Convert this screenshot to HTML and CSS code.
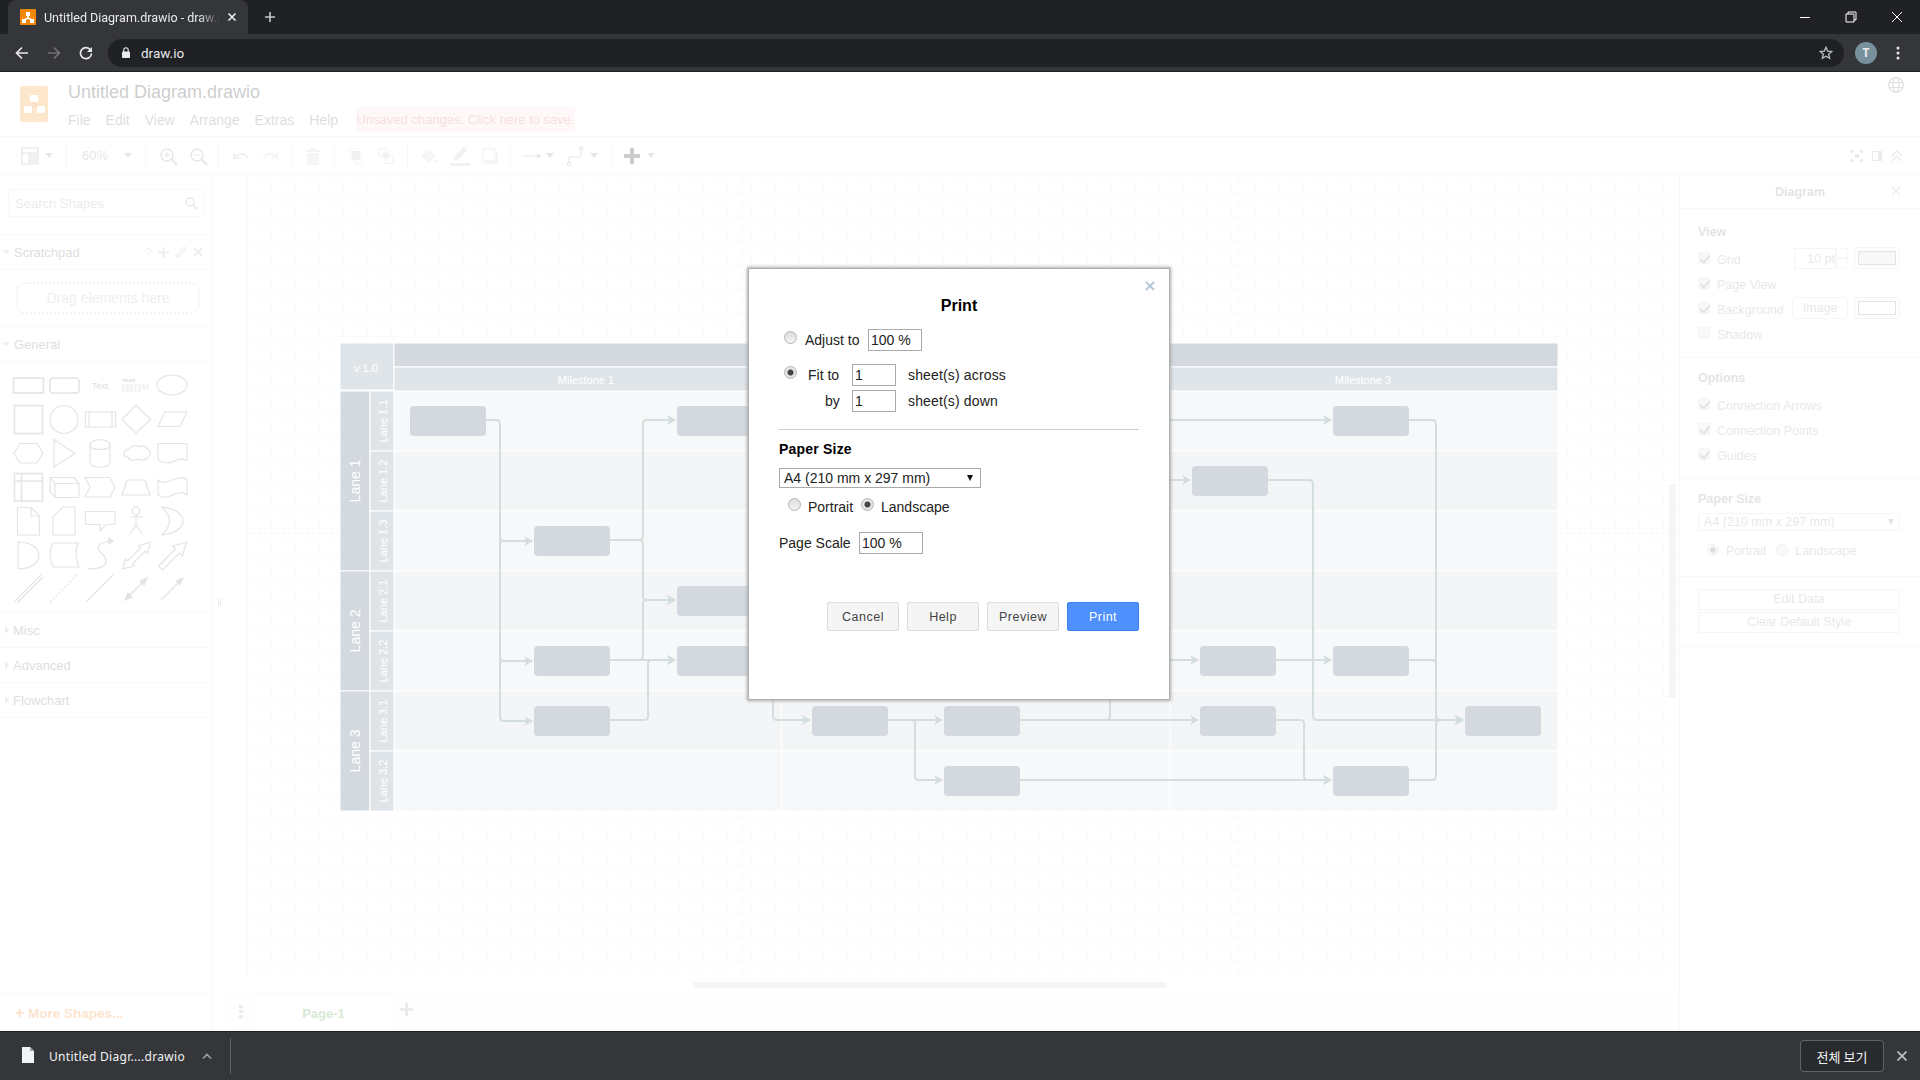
FILE: index.html
```html
<!DOCTYPE html>
<html lang="en">
<head>
    <meta charset="UTF-8">
    <title>Untitled Diagram.drawio - draw.io</title>
    <link rel="stylesheet" href="styles.css">
</head>
<body>

    <!-- Browser tab strip -->
    <div class="tabstrip">
        <div class="tab">
            <svg class="favicon" width="16" height="16" viewBox="0 0 16 16">
                <rect width="16" height="16" rx="1" fill="#f08705"/>
                <path d="M8 6v3M8 9l-4 2M8 9l4 2" stroke="#fff" stroke-width="1.5"/>
                <rect x="6" y="3" width="4" height="4" fill="#fff"/>
                <rect x="2" y="10" width="4" height="4" fill="#fff"/>
                <rect x="10" y="10" width="4" height="4" fill="#fff"/>
            </svg>
            <span class="tab-title">Untitled Diagram.drawio - draw.io</span>
            <svg class="tab-close" width="10" height="10" viewBox="0 0 10 10"><path d="M1.5 1.5l7 7M8.5 1.5l-7 7" stroke="#e8eaed" stroke-width="1.7"/></svg>
        </div>
        <svg class="new-tab" width="12" height="12" viewBox="0 0 12 12"><path d="M6 1v10M1 6h10" stroke="#c4c7c5" stroke-width="1.6"/></svg>
        <div class="window-btns">
            <svg width="12" height="12" viewBox="0 0 12 12"><path d="M1 6.5h10" stroke="#fff" stroke-width="1"/></svg>
            <svg width="12" height="12" viewBox="0 0 12 12"><path d="M3 3V1h8v8H9M1 3h8v8H1z" fill="none" stroke="#fff" stroke-width="1"/></svg>
            <svg width="12" height="12" viewBox="0 0 12 12"><path d="M1 1l10 10M11 1L1 11" stroke="#fff" stroke-width="1"/></svg>
        </div>
    </div>

    <!-- Browser address bar -->
    <div class="navbar">
        <svg class="nav-btn" width="14" height="14" viewBox="0 0 14 14"><path d="M13 7H2M7 1.5L1.5 7 7 12.5" fill="none" stroke="#e8eaed" stroke-width="1.7"/></svg>
        <svg class="nav-btn" width="14" height="14" viewBox="0 0 14 14"><path d="M1 7h11M7 1.5L12.5 7 7 12.5" fill="none" stroke="#707275" stroke-width="1.7"/></svg>
        <svg class="nav-btn" width="14" height="14" viewBox="0 0 14 14"><path d="M11.5 4A5.5 5.5 0 1 0 12.5 7.5" fill="none" stroke="#e8eaed" stroke-width="1.7"/><path d="M13 1v5H8z" fill="#e8eaed"/></svg>
        <div class="omnibox">
            <svg width="8" height="11" viewBox="0 0 8 11"><path d="M1.8 5V3a2.2 2.2 0 0 1 4.4 0v2" fill="none" stroke="#e8eaed" stroke-width="1.1"/><rect y="4.5" width="8" height="6.5" rx="1" fill="#e8eaed"/></svg>
            <span class="url">draw.io</span>
            <svg class="star" width="14" height="14" viewBox="0 0 14 14"><path d="M7 1.3l1.7 3.8 4.1.4-3.1 2.7.9 4.1L7 10.2l-3.6 2.1.9-4.1L1.2 5.5l4.1-.4z" fill="none" stroke="#bdc1c6" stroke-width="1.3"/></svg>
        </div>
        <div class="avatar">T</div>
        <svg class="kebab" width="4" height="14" viewBox="0 0 4 14"><circle cx="2" cy="2" r="1.5"/><circle cx="2" cy="7" r="1.5"/><circle cx="2" cy="12" r="1.5"/></svg>
    </div>

    <div class="app">

        <!-- draw.io header -->
        <div class="header">
            <svg class="logo" width="28" height="36" viewBox="0 0 28 36">
                <rect width="28" height="36" rx="2" fill="#f08705"/>
                <path d="M14 14l-7 8h14z" fill="#df6c0c"/>
                <rect x="10" y="9" width="8" height="7" rx="1" fill="#fff"/>
                <rect x="4" y="20" width="8" height="7" rx="1" fill="#fff"/>
                <rect x="17" y="20" width="8" height="7" rx="1" fill="#fff"/>
            </svg>
            <div class="header-text">
                <div class="doc-title">Untitled Diagram.drawio</div>
                <div class="menu">
                    <span>File</span><span>Edit</span><span>View</span><span>Arrange</span><span>Extras</span><span>Help</span>
                    <div class="unsaved">Unsaved changes. Click here to save.</div>
                </div>
            </div>
            <svg class="globe" width="16" height="16" viewBox="0 0 16 16" fill="none" stroke="#666" stroke-width="1.2">
                <circle cx="8" cy="8" r="7.3"/><ellipse cx="8" cy="8" rx="3.2" ry="7.3"/><path d="M1 5.5h14M1 10.5h14"/>
            </svg>
        </div>

        <!-- draw.io toolbar -->
        <div class="toolbar">
            <div class="tb-group g-layout">
                <svg class="tb-btn" viewBox="0 0 24 24"><path d="M4 4h16v16H4zM4 9h16M11 9v11" fill="none" stroke="#777" stroke-width="1.2"/><rect x="11.5" y="9.5" width="8" height="10" fill="#bbb"/></svg>
                <i class="tb-caret"></i>
            </div>
            <div class="tb-group g-zoom">
                <span class="zoom-val">60%</span>
                <i class="tb-caret"></i>
            </div>
            <div class="tb-group g-zooms">
                <svg class="tb-btn" viewBox="0 0 24 24"><circle cx="11" cy="11" r="6" fill="none" stroke="#888" stroke-width="1.6"/><path d="M15 15l6 6" stroke="#888" stroke-width="2"/><path d="M8 11h6M11 8v6" stroke="#888"/></svg>
                <svg class="tb-btn" viewBox="0 0 24 24"><circle cx="11" cy="11" r="6" fill="none" stroke="#888" stroke-width="1.6"/><path d="M15 15l6 6" stroke="#888" stroke-width="2"/><path d="M8 11h6" stroke="#888"/></svg>
            </div>
            <div class="tb-group g-undo">
                <svg class="tb-btn" viewBox="0 0 24 24"><path d="M4 8v7h7l-2.6-2.600c3.400-2.600 7.600-1.400 9.300 2.600l2-.8C17.600 8.800 12 7.300 7 11z" fill="#bbb"/></svg>
                <svg class="tb-btn" viewBox="0 0 24 24"><path d="M20 8v7h-7l2.600-2.600c-3.400-2.600-7.600-1.400-9.300 2.600l-2-.8C6.400 8.800 12 7.300 17 11z" fill="#ccc"/></svg>
            </div>
            <div class="tb-group g-one">
                <svg class="tb-btn" viewBox="0 0 24 24"><path d="M6 9h12v12H6zM4.500 6h15v2h-15zM9 4h6v2H9z" fill="#ccc"/></svg>
            </div>
            <div class="tb-group g-order">
                <svg class="tb-btn" viewBox="0 0 24 24"><path d="M5 4.500h8v8H5zM11 11.500h8v8h-8z" fill="none" stroke="#ccc"/><rect x="7.500" y="7" width="9" height="9" fill="#bbb"/></svg>
                <svg class="tb-btn" viewBox="0 0 24 24"><path d="M5 4.500h8v8H5zM11 11.500h8v8h-8z" fill="none" stroke="#bbb"/><rect x="9" y="8.500" width="6" height="6" fill="#bbb"/></svg>
            </div>
            <div class="tb-group g-style">
                <svg class="tb-btn" viewBox="0 0 24 24"><path d="M5 12l7-6 6 6.500-6 6zM6.500 4l3 3.500" fill="#ccc" stroke="#ccc"/><circle cx="20" cy="17" r="1.8" fill="#ccc"/></svg>
                <svg class="tb-btn" viewBox="0 0 24 24"><path d="M16 2.500l3.500 3.500-10 10-4 .5.500-4z" fill="#bbb"/><rect x="2" y="19" width="20" height="3" fill="#bbb"/></svg>
                <svg class="tb-btn" viewBox="0 0 24 24"><path d="M5 5h12v12H5z" fill="none" stroke="#ccc" stroke-width="1.6"/><path d="M18 7h2v13H7v-2h11z" fill="#ccc"/></svg>
            </div>
            <div class="tb-group g-edge">
                <svg class="tb-btn" viewBox="0 0 24 24"><path d="M3 12h15" stroke="#888"/><path d="M17 9.500l4.500 2.500-4.500 2.500z" fill="#888"/></svg>
                <i class="tb-caret edge-caret"></i>
                <svg class="tb-btn tb-gap" viewBox="0 0 24 24"><path d="M6 19v-6h12V6" fill="none" stroke="#888"/><path d="M4.500 18.500h3v3h-3zM16.500 3h3v3h-3z" fill="#fff" stroke="#888"/></svg>
                <i class="tb-caret"></i>
            </div>
            <div class="tb-group g-add">
                <svg class="tb-btn" viewBox="0 0 24 24"><path d="M12 4v16M4 12h16" stroke="#000" stroke-width="4"/></svg>
                <i class="tb-caret"></i>
            </div>
            <div class="tb-right">
                <svg width="20" height="24" viewBox="0 0 20 24"><path d="M4 6h3v2H6v1H4zM13 6h3v3h-2V8h-1zM4 15h2v1h1v2H4zM14 15h2v3h-3v-2h1z" fill="#999"/><rect x="8" y="10" width="4" height="4" fill="#999"/></svg>
                <svg width="20" height="24" viewBox="0 0 20 24"><path d="M5.500 7.500h9v9h-9z" fill="none" stroke="#999"/><rect x="11" y="7.500" width="3.500" height="9" fill="#999"/></svg>
                <svg width="20" height="24" viewBox="0 0 20 24"><path d="M5 12l5-5 5 5M5 17l5-5 5 5" fill="none" stroke="#999" stroke-width="1.5"/></svg>
            </div>
        </div>

        <div class="main">

            <!-- Shape sidebar -->
            <div class="sidebar">
                <div class="search-wrap">
                    <div class="search">
                        <span>Search Shapes</span>
                        <svg width="14" height="14" viewBox="0 0 14 14"><circle cx="6" cy="6" r="4" fill="none" stroke="#999" stroke-width="1.5"/><path d="M9 9l4 4" stroke="#999" stroke-width="2"/></svg>
                    </div>
                </div>
                <div class="sec-head"><i class="caret-down"></i><span>Scratchpad</span>
                    <div class="sec-tools">
                        <span class="q">?</span>
                        <svg width="11" height="11" viewBox="0 0 11 11"><path d="M5.500 0v11M0 5.500h11" stroke="#aaa" stroke-width="2"/></svg>
                        <svg width="12" height="12" viewBox="0 0 12 12"><path d="M9 1l2 2-7 7-3 1 1-3z" fill="none" stroke="#aaa" stroke-width="1.2"/></svg>
                        <svg width="10" height="10" viewBox="0 0 10 10"><path d="M1 1l8 8M9 1L1 9" stroke="#aaa" stroke-width="2"/></svg>
                    </div>
                </div>
                <div class="scratch"><div class="drag-box">Drag elements here</div></div>
                <div class="sec-head"><i class="caret-down"></i><span>General</span></div>
                <div class="shapes">
                    <svg width="212" height="250" viewBox="0 362 212 250" fill="none" stroke="#777" stroke-width="1.2">
                        <!-- row 1 -->
                        <rect x="13.500" y="378" width="30" height="15" stroke-width="1.6"/>
                        <rect x="50" y="378" width="29" height="15" rx="3" stroke-width="1.6"/>
                        <text class="shape-text" x="100" y="389" text-anchor="middle">Text</text>
                        <text class="shape-tiny" x="122" y="382">Headi</text>
                        <path d="M122 385h27M122 387h28M122 389h26M122 391h20" stroke-width=".8" stroke-dasharray="3 1"/>
                        <ellipse cx="172" cy="385" rx="15" ry="10"/>
                        <!-- row 2 -->
                        <rect x="14.500" y="405.500" width="28" height="28" stroke-width="1.5"/>
                        <circle cx="64" cy="419.500" r="14"/>
                        <path d="M85.500 412h30v15h-30zM89 412v15M112 412v15"/>
                        <path d="M136 405l14.500 14.500L136 433l-14-13.500z"/>
                        <path d="M158 426.500l7-14.500h22l-7 14.500z"/>
                        <!-- row 3 -->
                        <path d="M14 453.500l6-10h17l6 10-6 9.500H20z"/>
                        <path d="M54 439.500l21 14-21 13.500z"/>
                        <path d="M90 445c0-7 20-7 20 0v17c0 7-20 7-20 0zM90 445c0 6 20 6 20 0"/>
                        <path d="M129 449c2-4 8-4 10-2 3-2 8-1 8 2 4 1 4 6 1 8-1 3-7 4-10 2-3 2-9 2-10-2-5 0-6-7 1-8z"/>
                        <path d="M158 443.500h29v17c-9-5-14 5-22 2-5-1-7-2-7-4z"/>
                        <!-- row 4 -->
                        <path d="M14.500 473.500h28v27.500h-28zM21.500 473.500v27.500M14.500 481h28" stroke-width="1.5"/>
                        <path d="M50 477.500h24l5 6v14H55l-5-6zM50 477.500l5 6h24M55 483.500v14"/>
                        <path d="M85 477.500h25l5 9.500-5 10H85l5-10z"/>
                        <path d="M122 495l5-15h18l5 15z"/>
                        <path d="M158 480c9 8 20-8 29 0v15c-9-8-20 8-29 0z"/>
                        <!-- row 5 -->
                        <path d="M17.500 507.500H31l8.500 8.500v19h-22zM31 507.500v8.500h8.500"/>
                        <path d="M53 535v-18l10-10h12v28z"/>
                        <path d="M85.500 511.500H115v13h-9l-6 6.500v-6.500H85.500z"/>
                        <circle cx="136" cy="511" r="3.800"/>
                        <path d="M136 515v10M129.500 517h13.500M129.500 535l6.500-10 7 10"/>
                        <path d="M162 507c28 3 28 25 0 28 10-10 10-18 0-28z"/>
                        <!-- row 6 -->
                        <path d="M18 542c28 0 28 27 0 27z"/>
                        <path d="M53 543h25c-3 8-3 16 1 24H53c-4-8-4-16 0-24z"/>
                        <path d="M88 569c27 0 17-14 12-17-5-7 0-10 12-11"/><path d="M109 538l4 3-4 3z" fill="#777"/>
                        <path d="M122.500 569l3-10 2 2 13-13-2-2 12-4-3 11-2-2-13 13 2 2z"/>
                        <path d="M158.500 566l17-17-3-3 14-4-4 14-3-3-17 17z"/>
                        <!-- row 7 -->
                        <path d="M15 601l26-26M17 603l26-26"/>
                        <path d="M50 602l27-27" stroke-dasharray="2 2"/>
                        <path d="M86 602l27-27"/>
                        <path d="M127 598l18-18"/><path d="M125 600l3-7 4 4zM147 578l-7 3 4 4z" fill="#777"/>
                        <path d="M161 600l20-20"/><path d="M183 578l-7 3 4 4z" fill="#777"/>
                    </svg>
                </div>
                <div class="sec-head"><i class="caret-right"></i><span>Misc</span></div>
                <div class="sec-head"><i class="caret-right"></i><span>Advanced</span></div>
                <div class="sec-head"><i class="caret-right"></i><span>Flowchart</span></div>
                <div class="more-shapes"><b class="more-plus">+</b> More Shapes...</div>
            </div>

            <div class="gutter"><span class="grip"></span></div>

            <!-- Canvas and page tabs -->
            <div class="center">
                <div class="canvas">
                    <div class="grid">
                        <svg class="diagram" width="1434" height="803" viewBox="246 175 1434 803">
                            <defs>
                                <marker id="arr" markerWidth="10" markerHeight="10" refX="8" refY="5" orient="auto" markerUnits="userSpaceOnUse">
                                    <path d="M0 0L9 5 0 10 2.500 5z" fill="#2a5a50"/>
                                </marker>
                            </defs>
                            <path class="page-break" d="M743 175v803M1239 175v803M246 534h1434"/>

                            <rect class="lane-row odd" x="394" y="391" width="1164" height="60"/>
                            <rect class="lane-row even" x="394" y="451" width="1164" height="60"/>
                            <rect class="lane-row odd" x="394" y="511" width="1164" height="60"/>
                            <rect class="lane-row even" x="394" y="571" width="1164" height="60"/>
                            <rect class="lane-row odd" x="394" y="631" width="1164" height="60"/>
                            <rect class="lane-row even" x="394" y="691" width="1164" height="60"/>
                            <rect class="lane-row odd" x="394" y="751" width="1164" height="60"/>
                            <path class="lane-div" d="M781.500 391v420M1170 391v420"/>

                            <rect class="head-mid" x="340" y="343" width="54" height="47"/>
                            <rect class="head-dark" x="394" y="343" width="1164" height="24"/>
                            <rect class="head-mid" x="394" y="367" width="388" height="24"/>
                            <rect class="head-mid" x="782" y="367" width="388" height="24"/>
                            <rect class="head-mid" x="1170" y="367" width="388" height="24"/>

                            <rect class="head-dark" x="340" y="391" width="30" height="180"/>
                            <rect class="head-dark" x="340" y="571" width="30" height="120"/>
                            <rect class="head-dark" x="340" y="691" width="30" height="120"/>
                            <rect class="head-mid" x="370" y="391" width="24" height="60"/>
                            <rect class="head-mid" x="370" y="451" width="24" height="60"/>
                            <rect class="head-mid" x="370" y="511" width="24" height="60"/>
                            <rect class="head-mid" x="370" y="571" width="24" height="60"/>
                            <rect class="head-mid" x="370" y="631" width="24" height="60"/>
                            <rect class="head-mid" x="370" y="691" width="24" height="60"/>
                            <rect class="head-mid" x="370" y="751" width="24" height="60"/>

                            <text class="lbl" x="366" y="372" text-anchor="middle">v 1.0</text>
                            <text class="lbl" x="586" y="384" text-anchor="middle">Milestone 1</text>
                            <text class="lbl" x="1363" y="384" text-anchor="middle">Milestone 3</text>
                            <text class="lbl-big" transform="translate(360 481) rotate(-90)" text-anchor="middle">Lane 1</text>
                            <text class="lbl-big" transform="translate(360 631) rotate(-90)" text-anchor="middle">Lane 2</text>
                            <text class="lbl-big" transform="translate(360 751) rotate(-90)" text-anchor="middle">Lane 3</text>
                            <text class="lbl" transform="translate(387 421) rotate(-90)" text-anchor="middle">Lane 1.1</text>
                            <text class="lbl" transform="translate(387 481) rotate(-90)" text-anchor="middle">Lane 1.2</text>
                            <text class="lbl" transform="translate(387 541) rotate(-90)" text-anchor="middle">Lane 1.3</text>
                            <text class="lbl" transform="translate(387 601) rotate(-90)" text-anchor="middle">Lane 2.1</text>
                            <text class="lbl" transform="translate(387 661) rotate(-90)" text-anchor="middle">Lane 2.2</text>
                            <text class="lbl" transform="translate(387 721) rotate(-90)" text-anchor="middle">Lane 3.1</text>
                            <text class="lbl" transform="translate(387 781) rotate(-90)" text-anchor="middle">Lane 3.2</text>

                            <!-- connectors -->
                            <g class="edges">
                                <path d="M486 420h10q4 0 4 4v113q0 4 4 4h28" marker-end="url(#arr)"/>
                                <path d="M500 537v120q0 4 4 4h28" marker-end="url(#arr)"/>
                                <path d="M500 657v60q0 4 4 4h28" marker-end="url(#arr)"/>
                                <path d="M610 540h29q4 0 4-4V424q0-4 4-4h28" marker-end="url(#arr)"/>
                                <path d="M610 540h29q4 0 4 4v52q0 4 4 4h28" marker-end="url(#arr)"/>
                                <path d="M610 660h29q4 0 4-4v-52q0-4 4-4h28" marker-end="url(#arr)"/>
                                <path d="M610 720h34q4 0 4-4v-52q0-4 4-4h23" marker-end="url(#arr)"/>
                                <path d="M610 660h65" marker-end="url(#arr)"/>
                                <path d="M753 420h578" marker-end="url(#arr)"/>
                                <path d="M1100 480h90" marker-end="url(#arr)"/>
                                <path d="M1100 660h98" marker-end="url(#arr)"/>
                                <path d="M773 690v26q0 4 4 4h33" marker-end="url(#arr)"/>
                                <path d="M888 720h54" marker-end="url(#arr)"/>
                                <path d="M911 720q4 0 4 4v52q0 4 4 4h23" marker-end="url(#arr)"/>
                                <path d="M1020 720h86q4 0 4-4v-30"/>
                                <path d="M1020 720h178" marker-end="url(#arr)"/>
                                <path d="M1020 780h311" marker-end="url(#arr)"/>
                                <path d="M1276 720h24q4 0 4 4v52q0 4 4 4h23" marker-end="url(#arr)"/>
                                <path d="M1276 660h55" marker-end="url(#arr)"/>
                                <path d="M1409 420h23q4 0 4 4v292q0 4 4 4h23" marker-end="url(#arr)"/>
                                <path d="M1409 660h23q4 0 4 4v52q0 4 4 4h23" marker-end="url(#arr)"/>
                                <path d="M1409 780h23q4 0 4-4v-52q0-4 4-4h23" marker-end="url(#arr)"/>
                                <path d="M1268 480h41q4 0 4 4v232q0 4 4 4h146" marker-end="url(#arr)"/>
                            </g>

                            <!-- process boxes -->
                            <g class="boxes">
                                <rect x="410" y="406" width="76" height="30" rx="4"/>
                                <rect x="534" y="526" width="76" height="30" rx="4"/>
                                <rect x="534" y="646" width="76" height="30" rx="4"/>
                                <rect x="534" y="706" width="76" height="30" rx="4"/>
                                <rect x="677" y="406" width="76" height="30" rx="4"/>
                                <rect x="677" y="586" width="76" height="30" rx="4"/>
                                <rect x="677" y="646" width="76" height="30" rx="4"/>
                                <rect x="812" y="706" width="76" height="30" rx="4"/>
                                <rect x="944" y="706" width="76" height="30" rx="4"/>
                                <rect x="944" y="766" width="76" height="30" rx="4"/>
                                <rect x="1192" y="466" width="76" height="30" rx="4"/>
                                <rect x="1200" y="646" width="76" height="30" rx="4"/>
                                <rect x="1200" y="706" width="76" height="30" rx="4"/>
                                <rect x="1333" y="406" width="76" height="30" rx="4"/>
                                <rect x="1333" y="646" width="76" height="30" rx="4"/>
                                <rect x="1333" y="766" width="76" height="30" rx="4"/>
                                <rect x="1465" y="706" width="76" height="30" rx="4"/>
                            </g>
                        </svg>
                        <div class="scroll-v"></div>
                        <div class="scroll-h"></div>
                    </div>
                </div>
                <div class="pagebar">
                    <div class="pb-cell pb-dots"><span></span><span></span><span></span></div>
                    <div class="pb-page">Page-1</div>
                    <div class="pb-cell pb-add">
                        <svg width="13" height="13" viewBox="0 0 13 13"><path d="M6.500 0v13M0 6.500h13" stroke="#999" stroke-width="3"/></svg>
                    </div>
                </div>
            </div>

            <!-- Format panel -->
            <div class="format">
                <div class="fmt-title">Diagram
                    <svg class="fmt-close" width="10" height="10" viewBox="0 0 10 10"><path d="M1 1l8 8M9 1L1 9" stroke="#bbb" stroke-width="2"/></svg>
                </div>
                <div class="fmt-sec">
                    <div class="fmt-head">View</div>
                    <div class="fmt-row"><i class="chk on"></i><span>Grid</span>
                        <div class="fmt-right">
                            <div class="pt-input">10 pt</div>
                            <div class="spin"><i></i><i></i></div>
                            <div class="swatch"><span class="grey"></span></div>
                        </div>
                    </div>
                    <div class="fmt-row"><i class="chk on"></i><span>Page View</span></div>
                    <div class="fmt-row"><i class="chk on"></i><span>Background</span>
                        <div class="fmt-right">
                            <div class="img-btn">Image</div>
                            <div class="swatch"><span></span></div>
                        </div>
                    </div>
                    <div class="fmt-row"><i class="chk"></i><span>Shadow</span></div>
                </div>
                <div class="fmt-sec">
                    <div class="fmt-head">Options</div>
                    <div class="fmt-row"><i class="chk on"></i><span>Connection Arrows</span></div>
                    <div class="fmt-row"><i class="chk on"></i><span>Connection Points</span></div>
                    <div class="fmt-row"><i class="chk on"></i><span>Guides</span></div>
                </div>
                <div class="fmt-sec paper">
                    <div class="fmt-head">Paper Size</div>
                    <div class="fmt-select"><span>A4 (210 mm x 297 mm)</span><i></i></div>
                    <div class="fmt-radios">
                        <i class="rad on"></i><span class="rl-1">Portrait</span>
                        <i class="rad"></i><span class="rl-2">Landscape</span>
                    </div>
                </div>
                <div class="fmt-sec actions">
                    <div class="fmt-wide">Edit Data</div>
                    <div class="fmt-wide">Clear Default Style</div>
                </div>
            </div>
        </div>

        <div class="overlay"></div>

        <!-- Print dialog -->
        <div class="dialog">
            <svg class="dlg-close" width="10" height="10" viewBox="0 0 10 10"><path d="M1 1l8 8M9 1L1 9" stroke="#b9c7d6" stroke-width="2"/></svg>
            <div class="dlg-title">Print</div>
            <div class="dlg-row first">
                <i class="radio"></i><span class="lbl-adjust">Adjust to</span>
                <input class="inp w-54" value="100 %">
            </div>
            <div class="dlg-row second">
                <i class="radio checked"></i><span class="lbl-fit">Fit to</span>
                <input class="inp w-44" value="1"><span class="after">sheet(s) across</span>
            </div>
            <div class="dlg-row third">
                <span class="lbl-by">by</span>
                <input class="inp w-44" value="1"><span class="after">sheet(s) down</span>
            </div>
            <hr class="dlg-hr">
            <div class="dlg-head">Paper Size</div>
            <div class="dlg-select"><span>A4 (210 mm x 297 mm)</span><span class="sel-arrow"></span></div>
            <div class="dlg-row orient">
                <i class="radio"></i><span class="lbl-portrait">Portrait</span>
                <i class="radio checked"></i><span class="lbl-land">Landscape</span>
            </div>
            <div class="dlg-row scale">
                <span class="lbl-scale">Page Scale</span>
                <input class="inp w-64" value="100 %">
            </div>
            <div class="dlg-btns">
                <button class="btn">Cancel</button>
                <button class="btn">Help</button>
                <button class="btn">Preview</button>
                <button class="btn primary">Print</button>
            </div>
        </div>
    </div>

    <!-- Browser download shelf -->
    <div class="shelf">
        <svg class="shelf-file" width="12" height="16" viewBox="0 0 12 16"><path d="M0 0h8l4 4v12H0z" fill="#f1f3f4"/><path d="M8 0v4h4z" fill="#9aa0a6"/></svg>
        <span class="shelf-name">Untitled Diagr....drawio</span>
        <svg class="shelf-caret" width="10" height="6" viewBox="0 0 10 6"><path d="M1 5.500l4-4 4 4" fill="none" stroke="#9aa0a6" stroke-width="1.6"/></svg>
        <span class="shelf-sep"></span>
        <button class="show-all">전체 보기</button>
        <svg class="shelf-close" width="10" height="10" viewBox="0 0 10 10"><path d="M.5.500l9 9M9.500.500l-9 9" stroke="#bdc1c6" stroke-width="1.7"/></svg>
    </div>

</body>
</html>
```

FILE: styles.css
```css
* {
    box-sizing: border-box;
}
body {
    margin: 0;
    width: 1920px;
    height: 1080px;
    overflow: hidden;
    display: flex;
    flex-direction: column;
    font-family: "Liberation Sans", Arial, sans-serif;
    background: #fff;
}
i {
    display: block;
}

/* browser chrome */
.tabstrip {
    height: 34px;
    background: #202124;
    display: flex;
    align-items: center;
    flex-shrink: 0;
}
.tab {
    margin-left: 8px;
    width: 240px;
    height: 34px;
    background: #35363a;
    border-radius: 8px 8px 0 0;
    display: flex;
    align-items: center;
    padding-left: 12px;
}
.favicon {
    flex-shrink: 0;
}
.tab-title {
    margin-left: 8px;
    width: 176px;
    overflow: hidden;
    white-space: nowrap;
    font: 12.5px Roboto, sans-serif;
    color: #e8eaed;
    -webkit-mask-image: linear-gradient(to right, #000 88%, transparent);
}
.tab-close {
    margin-left: 7px;
    flex-shrink: 0;
}
.new-tab {
    margin-left: 16px;
}
.window-btns {
    margin-left: auto;
    display: flex;
    gap: 34px;
    padding-right: 17px;
}
.navbar {
    height: 38px;
    background: #35363a;
    border-bottom: 1px solid #1f2023;
    display: flex;
    align-items: center;
    padding-left: 15px;
    flex-shrink: 0;
}
.nav-btn {
    margin-right: 18px;
}
.omnibox {
    margin-left: -3px;
    width: 1736px;
    height: 28px;
    background: #202124;
    border-radius: 14px;
    display: flex;
    align-items: center;
    padding: 0 11px 0 14px;
}
.url {
    margin-left: 11px;
    font: 13.5px Roboto, sans-serif;
    color: #e8eaed;
}
.star {
    margin-left: auto;
}
.avatar {
    margin-left: 11px;
    width: 22px;
    height: 22px;
    border-radius: 50%;
    background: #78909c;
    color: #e8eaed;
    font: bold 12px/22px "Noto Sans", sans-serif;
    text-align: center;
}
.kebab {
    margin-left: 19px;
    fill: #e8eaed;
}

/* app shell */
.app {
    position: relative;
    flex: 1;
    display: flex;
    flex-direction: column;
    min-height: 0;
}
.overlay {
    position: absolute;
    inset: 0;
    background: rgba(255, 255, 255, 0.8);
}
.header {
    height: 65px;
    border-bottom: 1px solid #ddd;
    display: flex;
    padding: 14px 0 0 20px;
    flex-shrink: 0;
}
.header-text {
    margin-left: 20px;
}
.doc-title {
    font-size: 18px;
    line-height: 20px;
    margin-top: -4px;
    color: #000;
}
.menu {
    display: flex;
    align-items: center;
    gap: 15px;
    margin-top: 5px;
    font-size: 14px;
    color: #555;
}
.unsaved {
    margin-left: 3px;
    width: 219px;
    height: 25px;
    background: #f8dcdc;
    border-radius: 2px;
    color: #d26060;
    font-size: 13px;
    line-height: 25px;
    text-align: center;
    white-space: nowrap;
}
.globe {
    margin-left: auto;
    margin-right: 16px;
    margin-top: -9px;
}
.toolbar {
    height: 38px;
    border-bottom: 1px solid #ddd;
    display: flex;
    align-items: center;
    flex-shrink: 0;
}
.tb-group {
    height: 24px;
    display: flex;
    align-items: center;
    border-right: 1px solid #ddd;
    padding-left: 9px;
}
.tb-btn {
    width: 24px;
    height: 24px;
    flex-shrink: 0;
}
.tb-caret {
    margin-left: 3px;
    width: 0;
    height: 0;
    border: 4px solid transparent;
    border-top: 5px solid #888;
    border-bottom: 0;
}
.edge-caret {
    margin-left: 2px;
}
.tb-gap {
    margin-left: 9px;
}
.g-layout {
    width: 67px;
    padding-left: 18px;
}
.g-zoom {
    width: 79px;
    padding-left: 15px;
}
.zoom-val {
    width: 39px;
    font-size: 13px;
    color: #777;
}
.g-zooms {
    width: 73px;
    padding-left: 10px;
    gap: 6px;
}
.g-undo {
    width: 73px;
    padding-left: 10px;
    gap: 5px;
}
.g-one {
    width: 43px;
}
.g-order {
    width: 73px;
    gap: 6px;
}
.g-style {
    width: 103px;
    gap: 6.5px;
}
.g-edge {
    width: 101px;
}
.g-add {
    padding-left: 8px;
    border-right: 0;
}
.tb-right {
    margin-left: auto;
    padding-right: 13px;
    display: flex;
}
.main {
    flex: 1;
    display: flex;
    min-height: 0;
}

/* sidebar */
.sidebar {
    width: 213px;
    border-right: 1px solid #ddd;
    display: flex;
    flex-direction: column;
    flex-shrink: 0;
}
.search-wrap {
    height: 60px;
    padding: 14px 8px 0;
    border-bottom: 1px solid #ddd;
}
.search {
    height: 28px;
    width: 196px;
    border: 1px solid #ddd;
    border-radius: 3px;
    padding: 0 5px 0 6px;
    display: flex;
    align-items: center;
    justify-content: space-between;
    font-size: 13px;
    color: #999;
}
.sec-head {
    height: 35px;
    border-bottom: 1px solid #ddd;
    display: flex;
    align-items: center;
    padding-left: 2px;
    font-size: 13px;
    color: #555;
    flex-shrink: 0;
}
.caret-down {
    width: 0;
    height: 0;
    margin-right: 4px;
    border: 4px solid transparent;
    border-top: 4px solid #aaa;
    border-bottom: 0;
}
.caret-right {
    width: 0;
    height: 0;
    margin: 0 4px 0 3px;
    border: 4px solid transparent;
    border-left: 4px solid #aaa;
    border-right: 0;
}
.sec-tools {
    margin-left: auto;
    display: flex;
    align-items: center;
    gap: 6px;
    padding-right: 9px;
}
.sec-tools .q {
    color: #bbb;
}
.scratch {
    height: 57px;
    border-bottom: 1px solid #ddd;
    padding: 12px 0 0 16px;
}
.drag-box {
    width: 184px;
    height: 32px;
    border: 2px dotted #bbb;
    border-radius: 9px;
    font-size: 14px;
    line-height: 28px;
    text-align: center;
    color: #aaa;
}
.shapes {
    height: 251px;
    border-bottom: 1px solid #ddd;
    flex-shrink: 0;
}
.shapes svg {
    display: block;
}
.shape-text {
    font-size: 9px;
    fill: #555;
    stroke: none;
}
.shape-tiny {
    font-size: 5px;
    font-weight: bold;
    fill: #555;
    stroke: none;
}
.more-shapes {
    margin-top: auto;
    height: 38px;
    border-top: 1px solid #ddd;
    padding-left: 15px;
    font-size: 13.5px;
    font-weight: bold;
    line-height: 37px;
    color: #f57300;
}
.more-plus {
    font-size: 16px;
}
.gutter {
    width: 13px;
    flex-shrink: 0;
    display: flex;
    justify-content: center;
    padding-top: 424px;
}
.grip {
    width: 3px;
    height: 7px;
    border-left: 1px solid #999;
    border-right: 1px solid #999;
}

/* canvas */
.center {
    flex: 1;
    display: flex;
    flex-direction: column;
    min-width: 0;
}
.canvas {
    flex: 1;
    padding: 0 0 15px 20px;
    display: flex;
    min-height: 0;
}
.grid {
    position: relative;
    flex: 1;
    border-left: 1px solid #ddd;
    background-image:
        linear-gradient(#ececec 1px, transparent 1px),
        linear-gradient(90deg, #ececec 1px, transparent 1px),
        linear-gradient(#f6f6f6 1px, transparent 1px),
        linear-gradient(90deg, #f6f6f6 1px, transparent 1px);
    background-size: 24px 24px, 24px 24px, 12px 12px, 12px 12px;
    background-position: 0 17px, 0 17px, 0 5px, 0 5px;
}
.diagram {
    position: absolute;
    left: -1px;
    top: 0;
}
.page-break {
    fill: none;
    stroke: #d8d8d8;
    stroke-dasharray: 3 3;
}
.lane-row {
    stroke: #fff;
}
.lane-row.odd {
    fill: #d7dce6;
}
.lane-row.even {
    fill: #c3cdd7;
}
.lane-div {
    stroke: #fff;
    fill: none;
}
.head-dark {
    fill: #23445d;
    stroke: #fff;
}
.head-mid {
    fill: #5f7891;
    stroke: #fff;
}
.lbl {
    font-size: 11px;
    fill: #fff;
}
.lbl-big {
    font-size: 14px;
    fill: #fff;
}
.edges path {
    fill: none;
    stroke: #2a5a50;
    stroke-width: 2;
}
.boxes rect {
    fill: #23445d;
}
.scroll-v {
    position: absolute;
    right: 3px;
    top: 309px;
    width: 7px;
    height: 214px;
    background: #ccc;
    border-radius: 3px;
}
.scroll-h {
    position: absolute;
    left: 446px;
    top: 807px;
    width: 474px;
    height: 6px;
    background: #ccc;
    border-radius: 3px;
}
.pagebar {
    height: 38px;
    border-top: 1px solid #ddd;
    background: #f4f8f5;
    display: flex;
}
.pb-cell {
    width: 29px;
    display: flex;
    flex-direction: column;
    align-items: center;
    justify-content: center;
}
.pb-dots {
    gap: 2px;
    padding-bottom: 3px;
}
.pb-dots span {
    width: 4px;
    height: 3px;
    background: #999;
}
.pb-add {
    padding-bottom: 6px;
    border-right: 1px solid #eee;
}
.pb-page {
    width: 137px;
    background: #fff;
    border: 1px solid #eee;
    border-width: 0 1px;
    text-align: center;
    font-size: 13px;
    font-weight: bold;
    line-height: 39px;
    color: #2d8c28;
}

/* format panel */
.format {
    width: 241px;
    border-left: 1px solid #ddd;
    flex-shrink: 0;
    font-size: 12.5px;
    color: #888;
}
.fmt-title {
    position: relative;
    height: 34px;
    border-bottom: 1px solid #ddd;
    text-align: center;
    font-weight: bold;
    line-height: 35px;
    color: #777;
}
.fmt-close {
    position: absolute;
    right: 19px;
    top: 11px;
}
.fmt-sec {
    border-bottom: 1px solid #ddd;
    padding: 15px 20px 10px 18px;
}
.fmt-sec + .fmt-sec {
    padding-top: 12px;
}
.fmt-head {
    font-weight: bold;
    line-height: 16px;
    margin-bottom: 7px;
    color: #777;
}
.fmt-row {
    height: 25px;
    display: flex;
    align-items: center;
}
.chk {
    width: 12px;
    height: 12px;
    margin: -4px 7px 0 0;
    border: 1px solid #ccc;
    border-radius: 2px;
    background: #ddd;
    position: relative;
}
.chk.on::after {
    content: "";
    position: absolute;
    left: 3px;
    top: 0;
    width: 4px;
    height: 8px;
    border: solid #777;
    border-width: 0 2px 2px 0;
    transform: rotate(40deg);
}
.fmt-right {
    margin-left: auto;
    display: flex;
    align-items: center;
    margin-top: -3px;
}
.pt-input {
    width: 42px;
    height: 21px;
    border: 1px solid #ccc;
    text-align: right;
    line-height: 20px;
    white-space: nowrap;
}
.spin {
    width: 12px;
    margin-right: 6px;
}
.spin i {
    height: 10px;
    border: 1px solid #ddd;
}
.swatch {
    width: 46px;
    height: 22px;
    border: 1px solid #ccc;
    border-radius: 3px;
    padding: 3px;
}
.swatch span {
    display: block;
    height: 14px;
    border: 1px solid #777;
}
.swatch .grey {
    background: #ddd;
}
.img-btn {
    width: 56px;
    height: 22px;
    margin-right: 6px;
    border: 1px solid #ccc;
    border-radius: 3px;
    text-align: center;
    line-height: 20px;
}
.paper {
    padding-bottom: 14px;
}
.paper .fmt-head {
    margin-bottom: 6px;
}
.fmt-select {
    height: 18px;
    border: 1px solid #ccc;
    border-radius: 1px;
    padding: 0 5px;
    display: flex;
    justify-content: space-between;
    align-items: center;
}
.fmt-select i {
    width: 0;
    height: 0;
    border: 3px solid transparent;
    border-top: 6px solid #777;
    border-bottom: 0;
}
.fmt-radios {
    height: 22px;
    margin-top: 9px;
    display: flex;
    align-items: center;
    padding-left: 9px;
}
.rad {
    width: 12px;
    height: 12px;
    margin-top: -3px;
    border-radius: 50%;
    border: 1px solid #bbb;
    background: #ddd;
}
.rad.on {
    background: radial-gradient(circle, #555 2.5px, #ddd 3px);
}
.rl-1 {
    margin: 0 10px 0 7px;
}
.rl-2 {
    margin-left: 7px;
}
.actions {
    padding-top: 12px !important;
    padding-bottom: 13px;
    display: flex;
    flex-direction: column;
    gap: 2px;
}
.fmt-wide {
    height: 21px;
    border: 1px solid #ccc;
    border-radius: 1px;
    text-align: center;
    line-height: 19px;
}

/* print dialog */
.dialog {
    position: absolute;
    left: 748px;
    top: 196px;
    width: 422px;
    height: 432px;
    background: #fff;
    border: 1px solid #b0b0b0;
    box-shadow: 0 0 3px 1px #ababab;
    padding: 0 30px;
    font-size: 14px;
    color: #000;
}
.dlg-close {
    position: absolute;
    right: 14px;
    top: 12px;
}
.dlg-title {
    margin-top: 27px;
    text-align: center;
    font-size: 16px;
    font-weight: bold;
    line-height: 20px;
}
.dlg-row {
    display: flex;
    align-items: center;
    height: 22px;
    color: #222;
}
.dlg-row.first {
    margin-top: 13px;
}
.dlg-row.second {
    margin-top: 13px;
}
.dlg-row.third {
    margin-top: 4px;
}
.dlg-row.orient {
    margin-top: 8px;
}
.dlg-row.scale {
    margin-top: 14px;
}
.radio {
    width: 13px;
    height: 13px;
    margin: 0 0 5px 5px;
    border: 1px solid #b4b4b4;
    border-radius: 50%;
    background: linear-gradient(#dcdcdc, #f4f4f4);
    flex-shrink: 0;
}
.radio.checked {
    background: radial-gradient(circle, #444 2.5px, #e4e4e4 3.5px);
}
.lbl-adjust {
    margin-left: 8px;
    width: 63px;
}
.lbl-fit {
    margin-left: 11px;
    width: 44px;
}
.lbl-by {
    margin-left: 46px;
    width: 27px;
}
.lbl-portrait {
    margin-left: 7px;
    width: 48px;
}
.lbl-land {
    margin-left: 7px;
}
.orient .radio:first-child {
    margin-left: 9px;
}
.lbl-scale {
    width: 80px;
}
.after {
    margin-left: 12px;
    letter-spacing: .15px;
}
.inp {
    height: 22px;
    border: 1px solid #a9a9a9;
    border-radius: 0;
    padding: 0 2px;
    font: 14px "Liberation Sans", Arial, sans-serif;
    color: #222;
    outline: 0;
}
.w-54 {
    width: 54px;
}
.w-44 {
    width: 44px;
}
.w-64 {
    width: 64px;
}
.dlg-hr {
    margin: 17px 0 0;
    border: 0;
    border-top: 1px solid #ccc;
}
.dlg-head {
    margin-top: 11px;
    font-weight: bold;
    line-height: 16px;
    letter-spacing: .2px;
}
.dlg-select {
    margin-top: 11px;
    width: 202px;
    height: 20px;
    border: 1px solid #a9a9a9;
    padding: 0 7px 0 4px;
    display: flex;
    justify-content: space-between;
    align-items: center;
    line-height: 18px;
    color: #222;
}
.sel-arrow {
    width: 0;
    height: 0;
    border: 3px solid transparent;
    border-top: 6px solid #111;
    border-bottom: 0;
}
.dlg-btns {
    margin-top: 48px;
    display: flex;
    justify-content: flex-end;
    gap: 8px;
}
.btn {
    width: 72px;
    height: 29px;
    padding: 0;
    background: #f5f5f5;
    border: 1px solid #dcdcdc;
    border-radius: 2px;
    font: 12.5px "Liberation Sans", Arial, sans-serif;
    letter-spacing: .5px;
    color: #444;
}
.btn.primary {
    background: #4d90fe;
    border-color: #3f84f4;
    color: #fff;
}

/* download shelf */
.shelf {
    height: 49px;
    background: #35363a;
    border-top: 1px solid #1f2023;
    display: flex;
    align-items: center;
    flex-shrink: 0;
    padding-left: 22px;
}
.shelf-file {
    margin-top: -3px;
}
.shelf-name {
    margin: 1px 0 0 15px;
    font: 12px "Noto Sans", sans-serif;
    letter-spacing: .3px;
    color: #f1f3f4;
}
.shelf-caret {
    margin-left: 17px;
}
.shelf-sep {
    margin-left: 18px;
    width: 1px;
    height: 36px;
    background: #5f6368;
}
.show-all {
    margin-left: auto;
    width: 84px;
    height: 32px;
    background: #292a2d;
    border: 1px solid #5f6368;
    border-radius: 4px;
    color: #f1f3f4;
    font: 13px "Noto Sans CJK KR", sans-serif;
}
.shelf-close {
    margin: 0 13px;
}
```
